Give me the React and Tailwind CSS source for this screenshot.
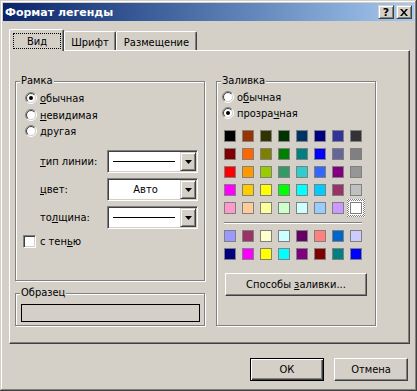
import React from "react";

const PAL1 = [
  ["#000000", "#993300", "#333300", "#003300", "#003366", "#000080", "#333399", "#333333"],
  ["#800000", "#FF6600", "#808000", "#008000", "#008080", "#0000FF", "#666699", "#808080"],
  ["#FF0000", "#FF9900", "#99CC00", "#339966", "#33CCCC", "#3366FF", "#800080", "#969696"],
  ["#FF00FF", "#FFCC00", "#FFFF00", "#00FF00", "#00FFFF", "#00CCFF", "#993366", "#C0C0C0"],
  ["#FF99CC", "#FFCC99", "#FFFF99", "#CCFFCC", "#CCFFFF", "#99CCFF", "#CC99FF", "#FFFFFF"],
];
const PAL2 = [
  ["#9999FF", "#993366", "#FFFFCC", "#CCFFFF", "#660066", "#FF8080", "#0066CC", "#CCCCFF"],
  ["#000080", "#FF00FF", "#FFFF00", "#00FFFF", "#800080", "#800000", "#008080", "#0000FF"],
];

function Radio({ checked }) {
  return (
    <svg width="12" height="12" viewBox="0 0 12 12" className="shrink-0">
      <defs>
        <linearGradient id="ro" x1="0" y1="0" x2="1" y2="1">
          <stop offset="0.5" stopColor="#808080" />
          <stop offset="0.5" stopColor="#ffffff" />
        </linearGradient>
        <linearGradient id="ri" x1="0" y1="0" x2="1" y2="1">
          <stop offset="0.5" stopColor="#404040" />
          <stop offset="0.5" stopColor="#d4d0c8" />
        </linearGradient>
      </defs>
      <circle cx="6" cy="6" r="5.5" fill="none" stroke="url(#ro)" strokeWidth="1" />
      <circle cx="6" cy="6" r="4.5" fill="#ffffff" stroke="url(#ri)" strokeWidth="1" />
      {checked && <circle cx="6" cy="6" r="2" fill="#000000" />}
    </svg>
  );
}

function Arrow() {
  return (
    <svg width="7" height="4" viewBox="0 0 7 4">
      <polygon points="0,0 7,0 3.5,4" fill="#000" />
    </svg>
  );
}

function Combo({ children }) {
  return (
    <div className="w-[91px] h-[23px] flex border border-t-[#808080] border-l-[#808080] border-b-white border-r-white shadow-[inset_1px_1px_0_#404040,inset_-1px_-1px_0_#d4d0c8] p-px">
      <div className="flex-1 bg-white flex items-center justify-center">{children}</div>
      <div className="w-[16px] h-full bg-[#d4d0c8] flex items-center justify-center border border-t-[#d4d0c8] border-l-[#d4d0c8] border-b-[#404040] border-r-[#404040] shadow-[inset_1px_1px_0_#fff,inset_-1px_-1px_0_#808080]">
        <Arrow />
      </div>
    </div>
  );
}

function Line() {
  return <div className="w-[62px] h-px bg-black ml-[-2px]" />;
}

function Group({ label, className, children }) {
  return (
    <div className={"relative border border-[#808080] shadow-[inset_1px_1px_0_#fff,1px_1px_0_#fff] " + className}>
      <span className="absolute top-[-8px] left-[4px] px-px bg-[#d4d0c8] leading-[13px]">{label}</span>
      {children}
    </div>
  );
}

function Swatch({ c, selected }) {
  if (selected) {
    return (
      <div className="w-[18px] h-[18px] flex items-center justify-center bg-[repeating-conic-gradient(#808080_0_25%,#ffffff_0_50%)] bg-[length:2px_2px]">
        <div className="w-[14px] h-[14px] bg-white flex items-center justify-center">
          <div className="w-[12px] h-[12px] border border-[#808080]" style={{ background: c }} />
        </div>
      </div>
    );
  }
  return (
    <div className="w-[18px] h-[18px] flex items-center justify-center">
      <div className="w-[12px] h-[12px] border border-[#808080]" style={{ background: c }} />
    </div>
  );
}

export default function App() {
  return (
    <div className="w-[417px] h-[391px] bg-[#d4d0c8] p-[3px] flex flex-col text-[11px] leading-[13px] text-black font-['DejaVu_Sans_Condensed','Liberation_Sans',sans-serif] shadow-[inset_-1px_-1px_0_#404040,inset_1px_1px_0_#d4d0c8,inset_-2px_-2px_0_#808080,inset_2px_2px_0_#ffffff]">
      {/* Title bar */}
      <div className="h-[18px] shrink-0 flex items-center justify-between bg-linear-to-r from-[#0a246a] to-[#a6caf0] pl-[2px] pr-[2px]">
        <span className="text-white font-bold font-['DejaVu_Sans',sans-serif] text-[11px]">Формат легенды</span>
        <div className="flex gap-[2px]">
          <div className="w-[16px] h-[14px] bg-[#d4d0c8] flex items-center justify-center border border-t-[#d4d0c8] border-l-[#d4d0c8] border-b-[#404040] border-r-[#404040] shadow-[inset_1px_1px_0_#fff,inset_-1px_-1px_0_#808080] font-bold font-['DejaVu_Sans',sans-serif] text-[11px] leading-none">?</div>
          <div className="w-[16px] h-[14px] bg-[#d4d0c8] flex items-center justify-center border border-t-[#d4d0c8] border-l-[#d4d0c8] border-b-[#404040] border-r-[#404040] shadow-[inset_1px_1px_0_#fff,inset_-1px_-1px_0_#808080]">
            <svg width="8" height="7" viewBox="0 0 8 7">
              <path d="M0 0h2l2 2.5L6 0h2L5 3.5 8 7H6L4 4.5 2 7H0l3-3.5z" fill="#000" />
            </svg>
          </div>
        </div>
      </div>

      {/* Body */}
      <div className="pl-[6px] mt-[8px] flex flex-col">
        {/* Tabs */}
        <div className="flex items-end h-[21px]">
          <div className="relative z-10 -mb-px w-[55px] h-[22px] bg-[#d4d0c8] rounded-t-[2px] border-t border-l border-white border-r border-r-[#404040] shadow-[inset_-1px_0_0_#808080] pt-[3px] pl-[3px]">
            <div className="w-[48px] h-[16px] border border-dotted border-black flex items-center justify-center">Вид</div>
          </div>
          <div className="w-[52px] h-[19px] rounded-t-[2px] border-t border-l border-white border-r border-r-[#404040] shadow-[inset_-1px_0_0_#808080] flex items-center justify-center pt-[2px]">Шрифт</div>
          <div className="w-[81px] h-[19px] rounded-t-[2px] border-t border-l border-white border-r border-r-[#404040] shadow-[inset_-1px_0_0_#808080] flex items-center justify-center pt-[2px]">Размещение</div>
        </div>

        {/* Panel */}
        <div className="w-[401px] h-[294px] border-t border-l border-white border-r border-b border-r-[#404040] border-b-[#404040] shadow-[inset_-1px_-1px_0_#808080] pt-[30px] pl-[5px] flex">
          {/* Left column */}
          <div className="w-[190px] flex flex-col">
            <Group label="Рамка" className="w-[190px] h-[200px] pt-[8px]">
              <div className="flex flex-col pl-[9px]">
                <div className="h-[16px] flex items-center gap-[3px]">
                  <Radio checked />
                  <span><u>о</u>бычная</span>
                </div>
                <div className="h-[16px] mt-px flex items-center gap-[3px]">
                  <Radio />
                  <span><u>н</u>евидимая</span>
                </div>
                <div className="h-[16px] flex items-center gap-[3px]">
                  <Radio />
                  <span>другая</span>
                </div>
              </div>
              <div className="flex flex-col gap-[5px] mt-[11px] pl-[24px]">
                <div className="flex items-center">
                  <span className="w-[67px]"><u>т</u>ип линии:</span>
                  <Combo><Line /></Combo>
                </div>
                <div className="flex items-center">
                  <span className="w-[67px]"><u>ц</u>вет:</span>
                  <Combo><span className="pl-[2px]">Авто</span></Combo>
                </div>
                <div className="flex items-center">
                  <span className="w-[67px]">то<u>л</u>щина:</span>
                  <Combo><Line /></Combo>
                </div>
              </div>
              <div className="flex items-center gap-[4px] mt-[6px] pl-[7px]">
                <div className="w-[13px] h-[13px] bg-white border border-t-[#808080] border-l-[#808080] border-b-white border-r-white shadow-[inset_1px_1px_0_#404040,inset_-1px_-1px_0_#d4d0c8]" />
                <span>с тен<u>ь</u>ю</span>
              </div>
            </Group>
            <Group label="Образец" className="w-[190px] h-[33px] mt-[12px] pt-[10px] pl-[5px]">
              <div className="w-[179px] h-[18px] border border-black" />
            </Group>
          </div>

          {/* Right column */}
          <Group label="Заливка" className="ml-[11px] w-[160px] h-[245px] pt-[7px]">
            <div className="flex flex-col pl-[5px]">
              <div className="h-[16px] flex items-center gap-[3px]">
                <Radio />
                <span>о<u>б</u>ычная</span>
              </div>
              <div className="h-[16px] flex items-center gap-[3px]">
                <Radio checked />
                <span>прозра<u>ч</u>ная</span>
              </div>
            </div>
            <div className="pl-[4px] mt-[6px] flex flex-col">
              {PAL1.map((row, ri) => (
                <div key={ri} className="flex">
                  {row.map((c, ci) => (
                    <Swatch key={ci} c={c} selected={ri === 4 && ci === 7} />
                  ))}
                </div>
              ))}
              <div className="ml-[3px] mt-[5px] w-[138px] h-px bg-[#808080] shadow-[0_1px_0_#fff]" />
              <div className="mt-[4px] flex flex-col">
                {PAL2.map((row, ri) => (
                  <div key={ri} className="flex">
                    {row.map((c, ci) => (
                      <Swatch key={ci} c={c} />
                    ))}
                  </div>
                ))}
              </div>
            </div>
            <div className="ml-[8px] mt-[10px] w-[142px] h-[23px] flex items-center justify-center border border-t-white border-l-white border-b-[#404040] border-r-[#404040] shadow-[inset_-1px_-1px_0_#808080]">
              <span>Способы <u>з</u>аливки...</span>
            </div>
          </Group>
        </div>

        {/* Dialog buttons */}
        <div className="w-[401px] mt-[14px] flex justify-end gap-[10px] pr-[2px]">
          <div className="w-[74px] h-[23px] flex items-center justify-center border border-black shadow-[inset_1px_1px_0_#fff,inset_-1px_-1px_0_#404040,inset_-2px_-2px_0_#808080]">
            ОК
          </div>
          <div className="w-[74px] h-[23px] flex items-center justify-center border border-t-white border-l-white border-b-[#404040] border-r-[#404040] shadow-[inset_-1px_-1px_0_#808080]">
            Отмена
          </div>
        </div>
      </div>
    </div>
  );
}
